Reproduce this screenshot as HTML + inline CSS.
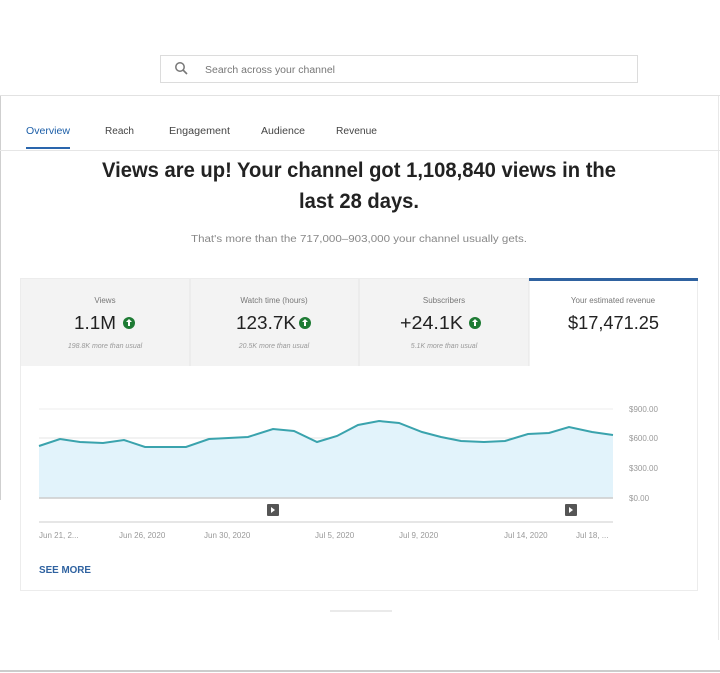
<!DOCTYPE html>
<html><head><meta charset="utf-8"><style>
html,body{margin:0;padding:0;background:#fff;width:720px;height:673px;overflow:hidden}
svg{display:block;font-family:"Liberation Sans",sans-serif}
</style></head><body>
<svg width="720" height="673" viewBox="0 0 720 673" xmlns="http://www.w3.org/2000/svg">
<rect width="720" height="673" fill="#fff"/>
<!-- search -->
<rect x="160.5" y="55.5" width="477" height="27" fill="#fff" stroke="#dcdcdc"/>
<circle cx="180" cy="67" r="4.2" fill="none" stroke="#777" stroke-width="1.5"/>
<line x1="183" y1="70" x2="187" y2="74" stroke="#777" stroke-width="1.6"/>
<text x="205" y="73" font-size="10" fill="#777" textLength="130" lengthAdjust="spacingAndGlyphs">Search across your channel</text>
<!-- outer panel -->
<line x1="0" y1="95.5" x2="720" y2="95.5" stroke="#e2e2e2"/>
<line x1="0.5" y1="96" x2="0.5" y2="500" stroke="#cfcfcf"/>
<line x1="718.5" y1="96" x2="718.5" y2="640" stroke="#e8e8e8"/>
<line x1="0" y1="150.5" x2="720" y2="150.5" stroke="#e6e6e6"/>
<!-- tabs -->
<text x="26" y="134" font-size="10" fill="#1d5fa8" textLength="44" lengthAdjust="spacingAndGlyphs">Overview</text>
<rect x="26" y="147" width="44" height="2" fill="#2a66ad"/>
<text x="105" y="134" font-size="10" fill="#444" textLength="29" lengthAdjust="spacingAndGlyphs">Reach</text>
<text x="169" y="134" font-size="10" fill="#444" textLength="61" lengthAdjust="spacingAndGlyphs">Engagement</text>
<text x="261" y="134" font-size="10" fill="#444" textLength="44" lengthAdjust="spacingAndGlyphs">Audience</text>
<text x="336" y="134" font-size="10" fill="#444" textLength="41" lengthAdjust="spacingAndGlyphs">Revenue</text>
<!-- headline -->
<text x="102" y="177" font-size="21" font-weight="bold" fill="#222" textLength="514" lengthAdjust="spacingAndGlyphs">Views are up! Your channel got 1,108,840 views in the</text>
<text x="299" y="208" font-size="21" font-weight="bold" fill="#222" textLength="120" lengthAdjust="spacingAndGlyphs">last 28 days.</text>
<text x="191" y="242" font-size="10" fill="#888" textLength="336" lengthAdjust="spacingAndGlyphs">That's more than the 717,000–903,000 your channel usually gets.</text>
<!-- card -->
<rect x="20.5" y="278.5" width="677" height="312" fill="#fff" stroke="#ececec"/>
<rect x="21" y="279" width="508" height="87" fill="#f3f3f3"/>
<line x1="190" y1="279" x2="190" y2="366" stroke="#e4e4e4"/>
<line x1="359" y1="279" x2="359" y2="366" stroke="#e4e4e4"/>
<line x1="529" y1="279" x2="529" y2="366" stroke="#e4e4e4"/>
<rect x="529" y="278" width="169" height="3" fill="#2f62a0"/>
<g font-size="8" fill="#777" text-anchor="middle">
<text x="105" y="303">Views</text>
<text x="274" y="303">Watch time (hours)</text>
<text x="444" y="303">Subscribers</text>
<text x="613" y="303">Your estimated revenue</text>
</g>
<g font-size="18" fill="#222">
<text x="74" y="329" textLength="42" lengthAdjust="spacingAndGlyphs">1.1M</text>
<text x="236" y="329" textLength="60" lengthAdjust="spacingAndGlyphs">123.7K</text>
<text x="400" y="329" textLength="63" lengthAdjust="spacingAndGlyphs">+24.1K</text>
<text x="568" y="329" textLength="91" lengthAdjust="spacingAndGlyphs">$17,471.25</text>
</g>
<g fill="#1e7b34">
<circle cx="129" cy="323" r="6"/><circle cx="305" cy="323" r="6"/><circle cx="475" cy="323" r="6"/>
</g>
<g fill="#fff"><path d="M129 319l3 3h-2v4h-2v-4h-2z"/><path d="M305 319l3 3h-2v4h-2v-4h-2z"/><path d="M475 319l3 3h-2v4h-2v-4h-2z"/></g>
<g font-size="7" fill="#999" font-style="italic" text-anchor="middle">
<text x="105" y="348">198.8K more than usual</text>
<text x="274" y="348">20.5K more than usual</text>
<text x="444" y="348">5.1K more than usual</text>
</g>
<!-- chart -->
<line x1="39" y1="409" x2="613" y2="409" stroke="#eee"/>
<line x1="39" y1="438" x2="613" y2="438" stroke="#e4e4e4"/>
<line x1="39" y1="468" x2="613" y2="468" stroke="#e4e4e4"/>
<path d="M39 446L60 439L80 442L103 443L124 440L145 447L186 447L209 439L248 437L273 429L294 431L317 442L337 436L358 425L379 421L399 423L422 432L441 437L461 441L484 442L505 441L528 434L549 433L569 427L592 432L613 435L613 498L39 498Z" fill="#e2f3fb"/>
<path d="M39 446L60 439L80 442L103 443L124 440L145 447L186 447L209 439L248 437L273 429L294 431L317 442L337 436L358 425L379 421L399 423L422 432L441 437L461 441L484 442L505 441L528 434L549 433L569 427L592 432L613 435" fill="none" stroke="#3aa3ad" stroke-width="2"/>
<line x1="39" y1="498" x2="613" y2="498" stroke="#ccc" stroke-width="1.5"/>
<line x1="39" y1="522" x2="613" y2="522" stroke="#ddd" stroke-width="1.5"/>
<rect x="267" y="504" width="12" height="12" rx="1" fill="#555"/><path d="M271 507v6l4-3z" fill="#fff"/>
<rect x="565" y="504" width="12" height="12" rx="1" fill="#555"/><path d="M569 507v6l4-3z" fill="#fff"/>
<g font-size="8" fill="#999">
<text x="629" y="412">$900.00</text><text x="629" y="441">$600.00</text><text x="629" y="471">$300.00</text><text x="629" y="501">$0.00</text>
<text x="39" y="538">Jun 21, 2...</text><text x="119" y="538">Jun 26, 2020</text><text x="204" y="538">Jun 30, 2020</text>
<text x="315" y="538">Jul 5, 2020</text><text x="399" y="538">Jul 9, 2020</text><text x="504" y="538">Jul 14, 2020</text><text x="576" y="538">Jul 18, ...</text>
</g>
<text x="39" y="573" font-size="10" font-weight="bold" fill="#2f62a0" textLength="52" lengthAdjust="spacingAndGlyphs">SEE MORE</text>
<line x1="330" y1="611" x2="392" y2="611" stroke="#e4e4e4" stroke-width="1.5"/>
<line x1="0" y1="671" x2="720" y2="671" stroke="#bbb" stroke-width="1.5"/>
</svg>
</body></html>
